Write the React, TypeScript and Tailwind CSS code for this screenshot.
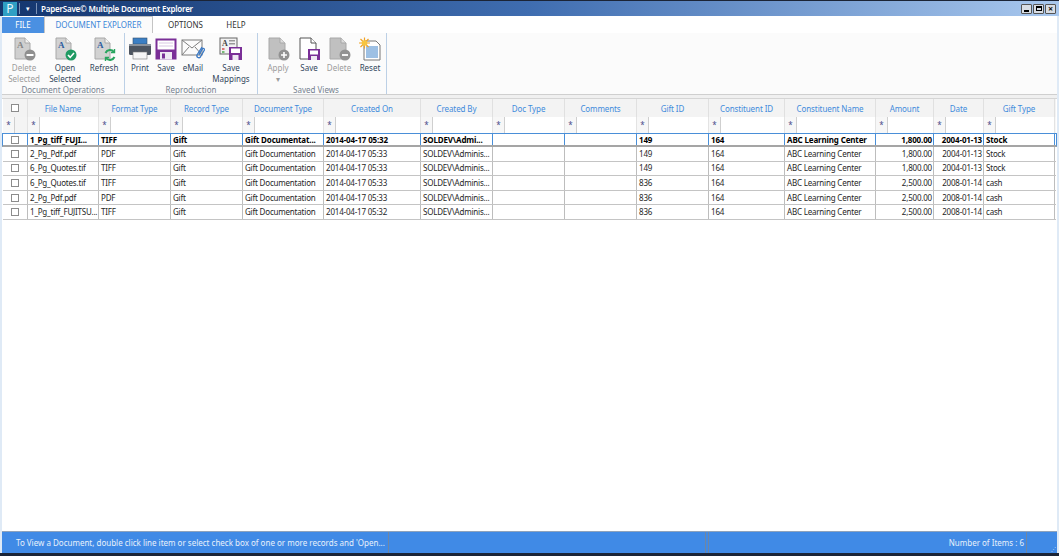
// PaperSave multiple document explorer window
const font = "font-['Noto_Sans','Liberation_Sans',sans-serif]"

const gridCols = 'grid grid-cols-[25px_71px_72px_72px_81px_97px_72px_72px_72px_72px_76px_91px_58px_50px_71px]'

const columns = [
  'File Name',
  'Format Type',
  'Record Type',
  'Document Type',
  'Created On',
  'Created By',
  'Doc Type',
  'Comments',
  'Gift ID',
  'Constituent ID',
  'Constituent Name',
  'Amount',
  'Date',
  'Gift Type',
]

const rows = [
  ['1_Pg_tiff_FUJI...', 'TIFF', 'Gift', 'Gift Documentat...', '2014-04-17 05:32', 'SOLDEV\\Admi...', '', '', '149', '164', 'ABC Learning Center', '1,800.00', '2004-01-13', 'Stock'],
  ['2_Pg_Pdf.pdf', 'PDF', 'Gift', 'Gift Documentation', '2014-04-17 05:33', 'SOLDEV\\Adminis...', '', '', '149', '164', 'ABC Learning Center', '1,800.00', '2004-01-13', 'Stock'],
  ['6_Pg_Quotes.tif', 'TIFF', 'Gift', 'Gift Documentation', '2014-04-17 05:33', 'SOLDEV\\Adminis...', '', '', '149', '164', 'ABC Learning Center', '1,800.00', '2004-01-13', 'Stock'],
  ['6_Pg_Quotes.tif', 'TIFF', 'Gift', 'Gift Documentation', '2014-04-17 05:33', 'SOLDEV\\Adminis...', '', '', '836', '164', 'ABC Learning Center', '2,500.00', '2008-01-14', 'cash'],
  ['2_Pg_Pdf.pdf', 'PDF', 'Gift', 'Gift Documentation', '2014-04-17 05:33', 'SOLDEV\\Adminis...', '', '', '836', '164', 'ABC Learning Center', '2,500.00', '2008-01-14', 'cash'],
  ['1_Pg_tiff_FUJITSU...', 'TIFF', 'Gift', 'Gift Documentation', '2014-04-17 05:32', 'SOLDEV\\Adminis...', '', '', '836', '164', 'ABC Learning Center', '2,500.00', '2008-01-14', 'cash'],
]

function DocIcon({ badge, gray }: { badge?: 'minus' | 'check' | 'refresh'; gray?: boolean }) {
  return (
    <svg width="24" height="24" viewBox="0 0 24 24">
      <path d="M3 1h10l5 5v16H3z" fill={gray ? '#cfcfcf' : '#d2d2d2'} stroke="#a8a8a8" />
      <path d="M13 1v5h5" fill="#f4f4f4" stroke="#a8a8a8" />
      <text x="5" y="11" fontSize="9" fontFamily="Liberation Serif" fontWeight="700" fill={gray ? '#858585' : '#2b5c9e'}>A</text>
      {badge === 'minus' && (
        <g>
          <circle cx="18" cy="18" r="5.5" fill="#8f8f8f" />
          <rect x="14.5" y="17" width="7" height="2" fill="#fff" />
        </g>
      )}
      {badge === 'check' && (
        <g>
          <circle cx="18" cy="18" r="5.5" fill="#1f9a63" />
          <path d="M15 18l2.2 2.4L21 16" fill="none" stroke="#fff" strokeWidth="1.6" />
        </g>
      )}
      {badge === 'refresh' && (
        <g fill="none" stroke="#28a55f" strokeWidth="2">
          <path d="M13.5 16a5 5 0 0 1 8.5-1" />
          <path d="M22.5 20a5 5 0 0 1-8.5 1" />
          <path d="M22.5 12v3.5H19" strokeWidth="1.4" />
          <path d="M13.5 24v-3.5H17" strokeWidth="1.4" />
        </g>
      )}
    </svg>
  )
}

function PrintIcon() {
  return (
    <svg width="24" height="24" viewBox="0 0 24 24">
      <rect x="5" y="1" width="14" height="6" fill="#3b7fc4" stroke="#35506e" strokeWidth="0.6" />
      <rect x="1" y="7" width="22" height="11" rx="1.5" fill="#4d5560" />
      <rect x="1" y="7" width="22" height="2" fill="#8a929c" />
      <rect x="5" y="15" width="14" height="7" fill="#f6f6f6" stroke="#777" strokeWidth="0.6" />
    </svg>
  )
}

function FloppyIcon() {
  return (
    <svg width="22" height="22" viewBox="0 0 22 22">
      <rect x="0.5" y="0.5" width="21" height="21" fill="#7a2f97" />
      <rect x="2.5" y="2.5" width="17" height="9" fill="#fff" />
      <path d="M4 5h14M4 8h14" stroke="#d9c6e3" />
      <rect x="5" y="14" width="12" height="7.5" fill="#efe8f3" />
      <rect x="7" y="15.5" width="3" height="5" fill="#7a2f97" />
    </svg>
  )
}

function MailIcon() {
  return (
    <svg width="24" height="24" viewBox="0 0 24 24">
      <rect x="1" y="3" width="20" height="15" fill="#fbfbfb" stroke="#7d7d7d" />
      <path d="M1 3l10 8 10-8M1 18l7-8M21 18l-7-8" fill="none" stroke="#7d7d7d" />
      <path d="M21 10l-5 8a2 2 0 0 0 3.4 2l4-7a1.2 1.2 0 0 0-2-1.2l-3.5 6" fill="none" stroke="#3a79c5" strokeWidth="1.3" />
    </svg>
  )
}

function MappingIcon() {
  return (
    <svg width="24" height="24" viewBox="0 0 24 24">
      <rect x="1" y="1" width="17" height="16" fill="#f2f2f2" stroke="#666" />
      <text x="3" y="9" fontSize="8" fontFamily="Liberation Serif" fontWeight="700" fill="#444">A</text>
      <rect x="10" y="3" width="6" height="1.5" fill="#999" />
      <rect x="10" y="6" width="6" height="1.5" fill="#999" />
      <rect x="3" y="11" width="2.5" height="2" fill="#d77" />
      <rect x="3" y="14" width="2.5" height="2" fill="#7b7" />
      <path d="M10 10h13v13H10z" fill="#7a2f97" />
      <rect x="12" y="11.5" width="9" height="4.5" fill="#fff" />
      <rect x="13.5" y="18" width="6" height="5" fill="#efe8f3" />
    </svg>
  )
}

function ViewDocIcon({ badge }: { badge: 'plus' | 'minus' | 'save' }) {
  const saved = badge === 'save'
  return (
    <svg width="24" height="24" viewBox="0 0 24 24">
      <path d="M3 1h11l5 5v16H3z" fill={saved ? '#fff' : '#c0c0c0'} stroke={saved ? '#555' : '#a8a8a8'} />
      <path d="M14 1v5h5" fill={saved ? '#fff' : '#dcdcdc'} stroke={saved ? '#555' : '#a8a8a8'} />
      {badge === 'plus' && (
        <g>
          <circle cx="18" cy="18" r="5.5" fill="#929292" />
          <path d="M18 15v6M15 18h6" stroke="#fff" strokeWidth="1.6" />
        </g>
      )}
      {badge === 'minus' && (
        <g>
          <circle cx="18" cy="18" r="5.5" fill="#929292" />
          <path d="M15 18h6" stroke="#fff" strokeWidth="1.8" />
        </g>
      )}
      {saved && (
        <g>
          <rect x="11" y="12" width="12" height="11" fill="#7a2f97" />
          <rect x="13" y="13.5" width="8" height="4" fill="#fff" />
          <rect x="14" y="19" width="6" height="4" fill="#efe8f3" />
        </g>
      )}
    </svg>
  )
}

function ResetIcon() {
  return (
    <svg width="24" height="24" viewBox="0 0 24 24">
      <path d="M6 4h12l4 4v15H6z" fill="#fff" stroke="#777" />
      <rect x="8" y="9" width="12" height="12" fill="#9dc0e4" />
      <g stroke="#f0a326" strokeWidth="1.2">
        <path d="M1 6h11M6.5 0.5v11M2.5 2l8 8M10.5 2l-8 8" />
      </g>
      <circle cx="6.5" cy="6" r="2.8" fill="#f7c53f" />
    </svg>
  )
}

function RibbonButton({
  icon,
  label,
  label2,
  disabled,
  width,
}: {
  icon: React.ReactNode
  label: string
  label2?: string
  disabled?: boolean
  width: string
}) {
  return (
    <div className={`flex flex-col items-center pt-[4px] text-[8px] leading-[11px] ${width} ${disabled ? 'text-[#9c9c9c]' : 'text-[#33475c]'}`}>
      <div className="h-[24px] flex items-center justify-center">{icon}</div>
      <div className="mt-[1px] text-center whitespace-nowrap">{label}</div>
      {label2 && <div className="text-center whitespace-nowrap">{label2}</div>}
    </div>
  )
}

function RibbonGroup({ title, children, width, titleClass }: { title: string; children: React.ReactNode; width: string; titleClass?: string }) {
  return (
    <div className={`flex flex-col h-[61px] border-r border-[#bcd0e6] ${width}`}>
      <div className="flex flex-1">{children}</div>
      <div className={`text-center text-[8px] leading-[11px] text-[#75818f] ${titleClass ?? ''}`}>{title}</div>
    </div>
  )
}

function WindowButton({ children }: { children: React.ReactNode }) {
  return (
    <div className="w-[11px] h-[10px] bg-[#d8dde4] border border-[#555] rounded-[1px] flex items-center justify-center text-[#111]">
      {children}
    </div>
  )
}

function Checkbox() {
  return <div className="w-[8px] h-[8px] border border-[#8c8c8c] bg-white" />
}

function FilterCell({ small }: { small?: boolean }) {
  return (
    <div className={`flex items-center border-r border-[#e3e3e3] ${small ? 'bg-[#f4f4f4]' : 'bg-white'}`}>
      <div className="w-[12px] h-full flex items-center justify-center border-r border-[#cfcfcf] bg-[#f7f7f7] text-[8px] leading-none text-[#4a4a8a]">
        *
      </div>
    </div>
  )
}

export default function App() {
  return (
    <div className={`${font} w-[1059px] h-[556px] flex flex-col bg-[#dfeaf6] overflow-hidden border-t border-[#1b2436]`}>
      {/* Title bar */}
      <div className="h-[15px] flex items-center bg-gradient-to-r from-[#14366e] via-[#3f6db0] to-[#a9c8ee] shrink-0">
        <div className="w-[14px] h-[14px] ml-[3px] bg-[#2f9fc4] text-[#e8f6fb] text-[12px] leading-[14px] text-center">P</div>
        <div className="w-[1px] h-[11px] bg-[#7c93b8] ml-[2px]" />
        <div className="text-white text-[7px] leading-none ml-[6px]">▾</div>
        <div className="w-[1px] h-[11px] bg-[#7c93b8] ml-[6px]" />
        <div className="ml-[4px] text-[8px] tracking-[-0.2px] text-white font-semibold whitespace-nowrap">PaperSave© Multiple Document Explorer</div>
        <div className="ml-auto mr-[3px] flex gap-[1px]">
          <WindowButton>
            <div className="w-[5px] h-[2px] bg-black mt-[4px]" />
          </WindowButton>
          <WindowButton>
            <div className="w-[6px] h-[5px] border border-black border-t-2" />
          </WindowButton>
          <WindowButton>
            <span className="text-[9px] leading-none font-bold">×</span>
          </WindowButton>
        </div>
      </div>

      {/* Tabs */}
      <div className="h-[17px] flex items-end bg-white text-[8px] shrink-0 mx-[2px]">
        <div className="w-[42px] h-[16px] bg-[#4a90e2] text-white flex items-center justify-center">FILE</div>
        <div className="w-[109px] h-[17px] border border-b-0 border-[#c4c4c4] text-[#3a86d8] flex items-center justify-center bg-[#fbfbfb]">DOCUMENT EXPLORER</div>
        <div className="w-[65px] h-[16px] text-[#333] flex items-center justify-center">OPTIONS</div>
        <div className="w-[36px] h-[16px] text-[#333] flex items-center justify-center">HELP</div>
      </div>

      {/* Ribbon */}
      <div className="h-[62px] flex bg-[#fbfbfb] border-b border-[#cfcfcf] mx-[2px] shrink-0">
        <RibbonGroup title="Document Operations" width="w-[123px]">
          <RibbonButton width="w-[44px]" icon={<DocIcon badge="minus" gray />} label="Delete" label2="Selected" disabled />
          <RibbonButton width="w-[38px]" icon={<DocIcon badge="check" />} label="Open" label2="Selected" />
          <RibbonButton width="w-[40px]" icon={<DocIcon badge="refresh" />} label="Refresh" />
        </RibbonGroup>
        <RibbonGroup title="Reproduction" width="w-[133px]">
          <RibbonButton width="w-[30px]" icon={<PrintIcon />} label="Print" />
          <RibbonButton width="w-[22px]" icon={<FloppyIcon />} label="Save" />
          <RibbonButton width="w-[32px]" icon={<MailIcon />} label="eMail" />
          <RibbonButton width="w-[44px]" icon={<MappingIcon />} label="Save" label2="Mappings" />
        </RibbonGroup>
        <RibbonGroup title="Saved Views" width="w-[129px]" titleClass="pr-[12px]">
          <RibbonButton width="w-[40px]" icon={<ViewDocIcon badge="plus" />} label="Apply" label2="▾" disabled />
          <RibbonButton width="w-[22px]" icon={<ViewDocIcon badge="save" />} label="Save" />
          <RibbonButton width="w-[38px]" icon={<ViewDocIcon badge="minus" />} label="Delete" disabled />
          <RibbonButton width="w-[24px]" icon={<ResetIcon />} label="Reset" />
        </RibbonGroup>
      </div>

      {/* Grid area */}
      <div className="flex-1 bg-white mx-[2px] min-h-0">
        <div className="h-[3px] bg-[#f0f0f0]" />
        <div className="pl-[1px] pr-[1px] border-t border-[#d5d5d5]">
          <div className={`${gridCols} h-[18px] bg-[#f3f3f3] text-[8px] tracking-[-0.1px] text-[#3f8bdc]`}>
            <div className="flex items-center justify-center border-r border-[#e0e0e0]">
              <Checkbox />
            </div>
            {columns.map((c) => (
              <div key={c} className="flex items-center justify-center pt-[2px] border-r border-[#e0e0e0] whitespace-nowrap">
                {c}
              </div>
            ))}
          </div>
          <div className={`${gridCols} h-[16px] bg-[#f7f7f7]`}>
            <FilterCell small />
            {columns.map((c) => (
              <FilterCell key={c} />
            ))}
          </div>
          {rows.map((r, i) => (
            <div
              key={i}
              className={`${gridCols} text-[8px] ${
                i === 0
                  ? 'h-[14px] font-bold tracking-[-0.15px] text-black border border-[#4a8fd8] border-b-2 border-b-[#a5a5a5] -mx-[1px]'
                  : 'h-[14.6px] tracking-[-0.2px] text-[#262626] border-b border-[#c4c4c4]'
              }`}
            >
              <div className={`flex items-center justify-center border-r ${i === 0 ? 'border-[#4a8fd8]' : 'border-[#bdbdbd]'}`}>
                <Checkbox />
              </div>
              {r.map((v, j) => (
                <div
                  key={j}
                  className={`flex items-center overflow-hidden whitespace-nowrap border-r pl-[2px] pr-[1px] ${
                    i === 0 ? 'border-[#4a8fd8]' : 'border-[#bdbdbd]'
                  } ${j === 11 || j === 12 ? 'justify-end' : ''}`}
                >
                  {v}
                </div>
              ))}
            </div>
          ))}
        </div>
      </div>

      {/* Status bar */}
      <div className="h-[22px] mx-[2px] bg-[#408ae6] border-t border-[#8fa3bb] flex text-[8px] text-[#e8f1fb] shrink-0">
        <div className="w-[387px] flex items-center pl-[14px] whitespace-nowrap border-r border-[#6f86a3]">
          To View a Document, double click line item or select check box of one or more records and 'Open...
        </div>
        <div className="w-[317px] border-r border-[#6f86a3]" />
        <div className="w-[319px] ml-[2px] flex items-center justify-end pr-[2px] whitespace-nowrap border-x border-[#6f86a3]">Number of Items : 6</div>
        <div className="flex-1 flex items-end justify-end pr-[1px] pb-[1px] text-[5px] leading-[5px] text-[#cfe0f5]">⋰</div>
      </div>
      <div className="h-[3px] bg-[#1b2436] shrink-0" />
    </div>
  )
}
